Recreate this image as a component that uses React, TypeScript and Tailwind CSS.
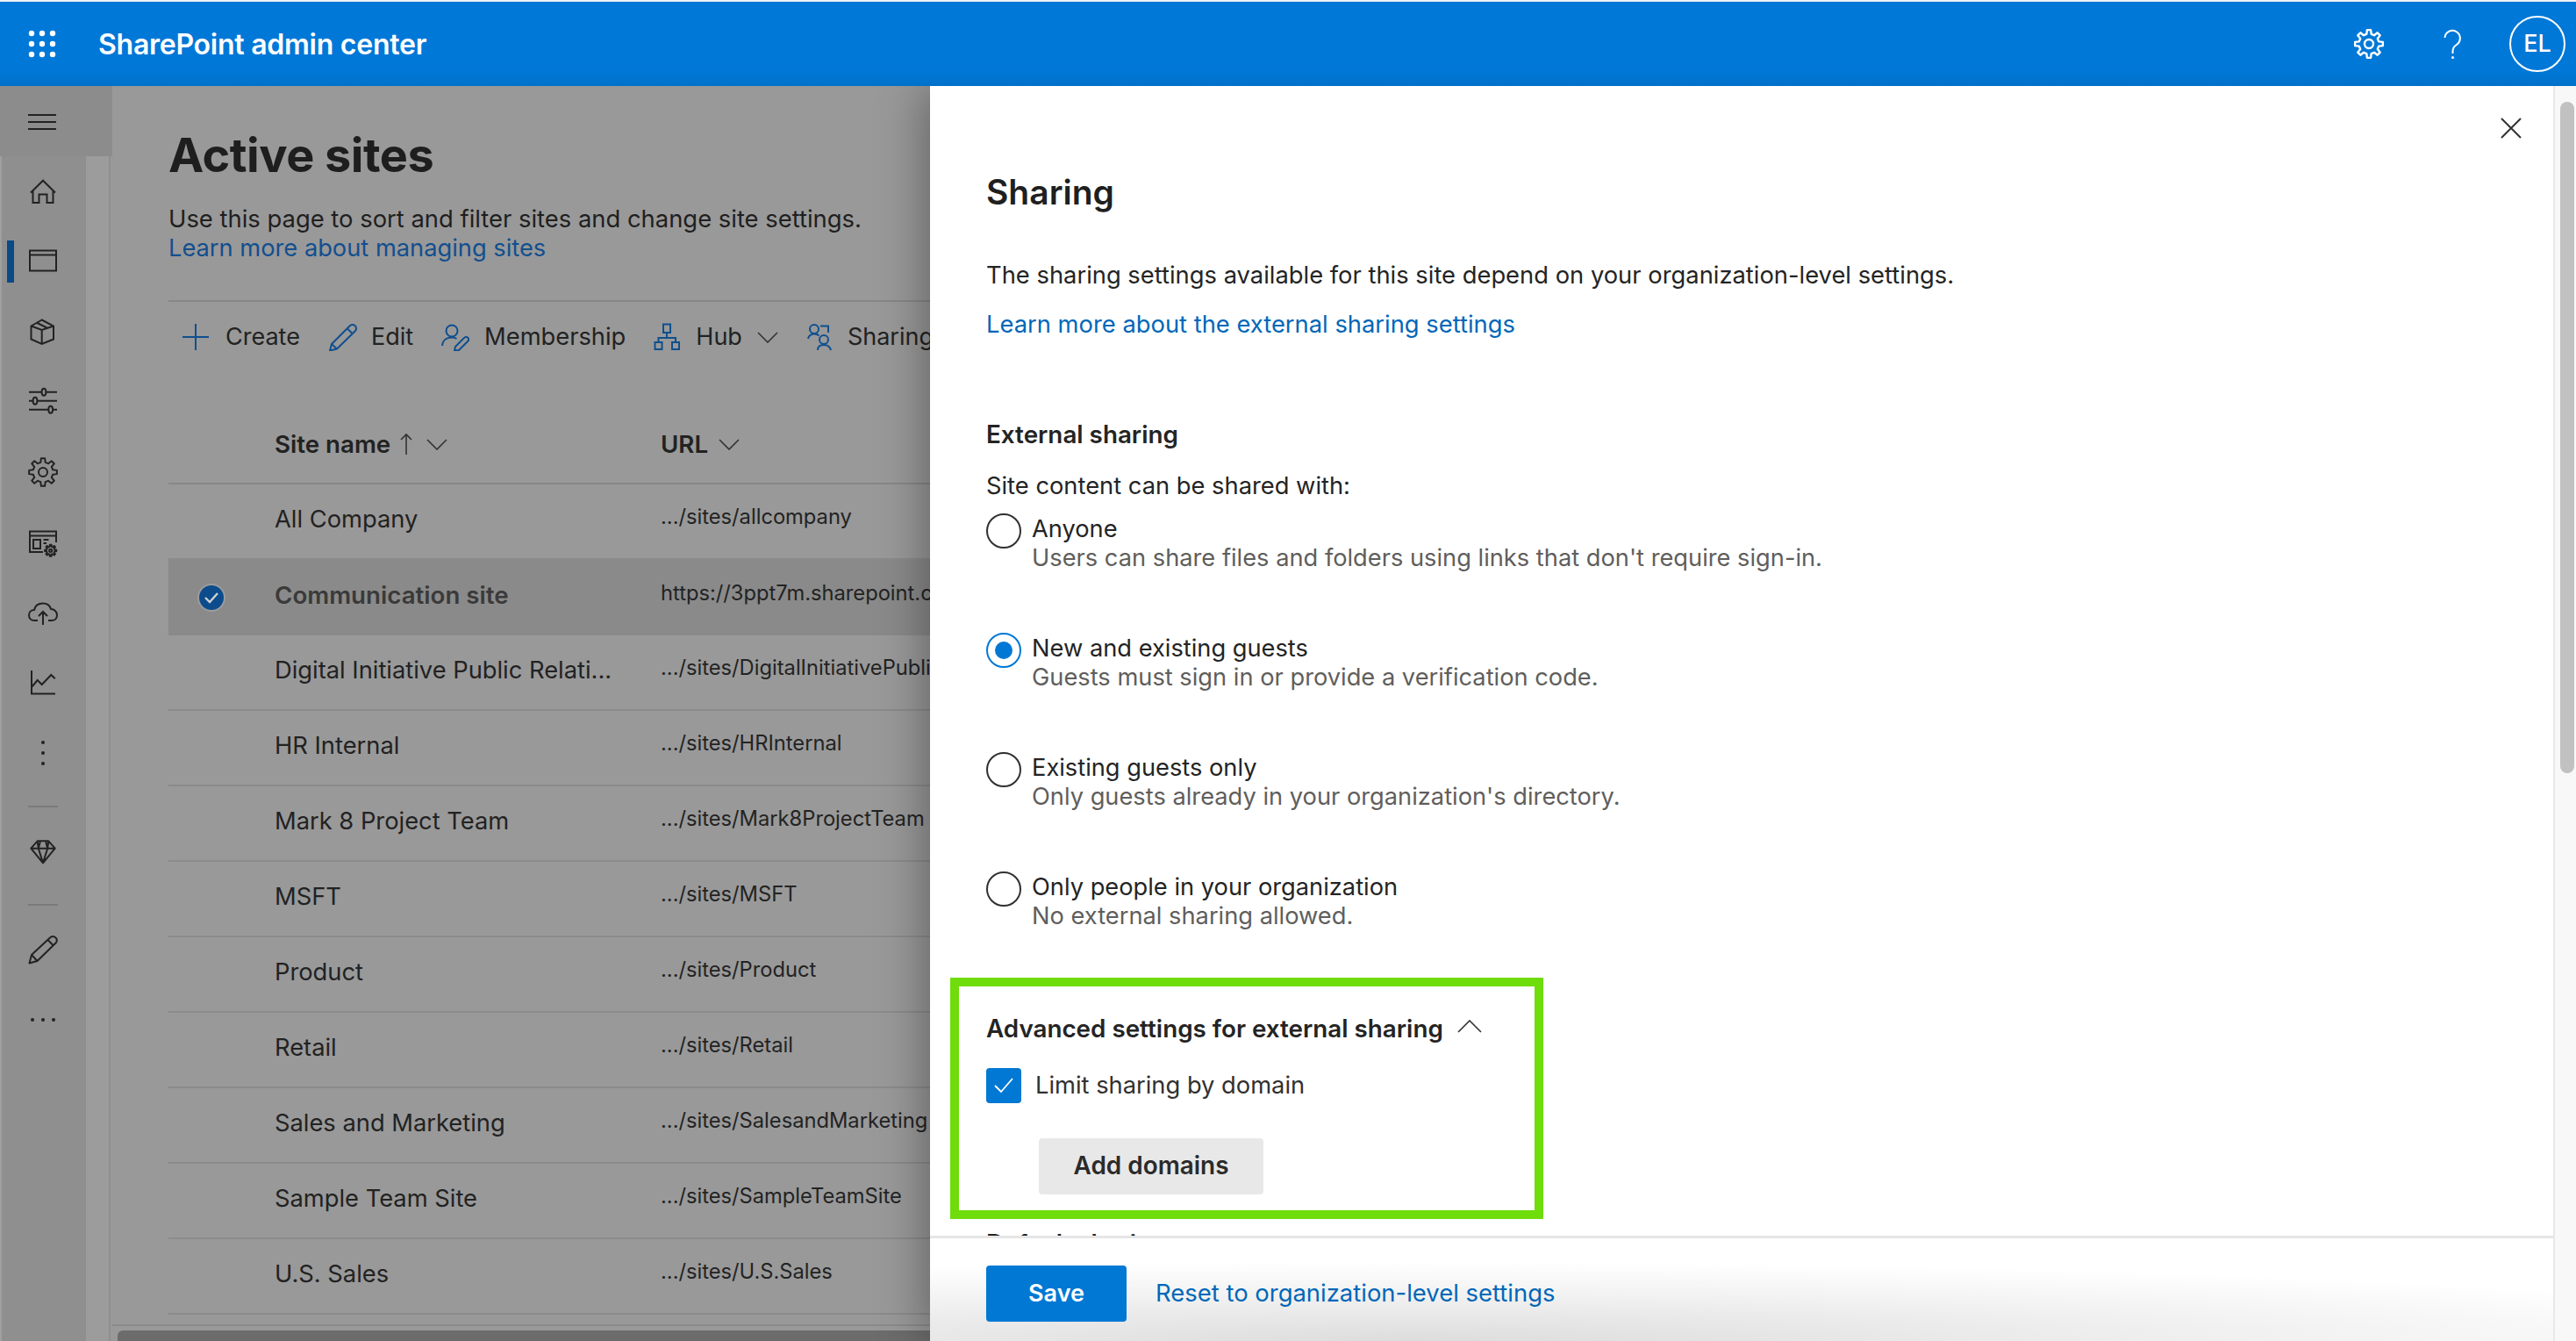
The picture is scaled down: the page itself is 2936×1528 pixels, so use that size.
import React from "react";

function gearPath(cx: number, cy: number, rOut: number, rIn: number, teeth = 8) {
  const step = (Math.PI * 2) / teeth;
  let d = "";
  for (let i = 0; i < teeth; i++) {
    const a = i * step - Math.PI / 2;
    const pts: [number, number][] = [
      [rIn, a - step * 0.3],
      [rOut, a - step * 0.17],
      [rOut, a + step * 0.17],
      [rIn, a + step * 0.3],
    ];
    pts.forEach(([r, t], j) => {
      const x = (cx + r * Math.cos(t)).toFixed(2);
      const y = (cy + r * Math.sin(t)).toFixed(2);
      d += (i === 0 && j === 0 ? "M" : "L") + x + " " + y + " ";
    });
  }
  return d + "Z";
}

const NavSvg = ({ children }: { children: React.ReactNode }) => (
  <svg width="48" height="48" viewBox="0 0 48 48" fill="none" stroke="#222222" strokeWidth="2">
    {children}
  </svg>
);

const navIcons: React.ReactNode[] = [
  <path d="M10 25.5 L24 11.7 L38 25.5 M12.5 23 V37 H19.5 V27.5 H28.5 V37 H35.5 V23" />,
  <>
    <rect x="9" y="11.5" width="30" height="23" />
    <path d="M9 16.5 H39" />
  </>,
  <path d="M22.7 10.5 L10.5 17.5 V32.5 L22.7 38 L36 32.5 V17.5 Z M10.5 17.5 L22.7 22 L36 17.5 M22.7 22 V38 M16.5 13.5 L29.5 20" />,
  <>
    <path d="M8 12.7 H40 M8 22.7 H40 M8 32.7 H40" />
    <ellipse cx="25" cy="12.7" rx="2.4" ry="4" fill="#909090" />
    <ellipse cx="15" cy="22.7" rx="2.4" ry="4" fill="#909090" />
    <ellipse cx="32.7" cy="32.7" rx="2.4" ry="4" fill="#909090" />
  </>,
  <>
    <path d={gearPath(24, 24, 16, 11.5)} strokeLinejoin="round" />
    <circle cx="24" cy="24" r="5" />
  </>,
  <>
    <path d="M24 35 H9 V11.5 H39 V24 M9 16.5 H39" />
    <rect x="13" y="21" width="8" height="10" />
    <path d="M24.5 21 H30.5 M24.5 25 H28" />
    <path d={gearPath(32.7, 33.3, 6.6, 4.6)} strokeLinejoin="round" />
    <circle cx="32.7" cy="33.3" r="1.6" />
  </>,
  <path d="M18 33 H14 C10.5 33 8 30.5 8 27 C8 23.5 10.5 21 14 21 C15 16 19 13.5 24 13.5 C29 13.5 32 16.5 33 20 C37 20 40 23 40 27 C40 30.5 37.5 33 34 33 H30 M24 38 V23 M19 28 L24 23 L29 28" />,
  <path d="M11 10 V36.5 H38 M11 29 L17.7 21 L22.7 26 L33.3 15 L37.7 19.3" />,
  <g fill="#222222" stroke="none">
    <circle cx="24" cy="12" r="2" />
    <circle cx="24" cy="24" r="2" />
    <circle cx="24" cy="36" r="2" />
  </g>,
];

const diamond = (
  <path d="M17.7 12.3 H30.3 L37.7 20.7 L24 37.3 L10.3 20.7 Z M10.3 20.7 H37.7 M17.7 12.3 L18.8 20.7 L24 37.3 L29.2 20.7 L30.3 12.3 M18.8 20.7 L21 12.3 M29.2 20.7 L27 12.3" strokeLinejoin="round" />
);
const navPencil = (
  <path d="M8.5 39.5 L11 30 L32.5 10 A4.5 4.5 0 0 1 39 16 L17.5 37 Z M29.5 13 L36 19.5 M11 30 L17.5 37" strokeLinejoin="round" />
);
const navMore = (
  <g fill="#222222" stroke="none">
    <circle cx="12" cy="24" r="2" />
    <circle cx="24" cy="24" r="2" />
    <circle cx="36" cy="24" r="2" />
  </g>
);

const Slot = ({ children, active }: { children: React.ReactNode; active?: boolean }) => (
  <div className="relative flex h-[80px] items-center justify-center">
    {active && <div className="absolute left-[8px] top-[16px] h-[48px] w-[8px] bg-[#0a4a86]" />}
    <NavSvg>{children}</NavSvg>
  </div>
);

const Sep = () => <div className="mx-[32px] mb-[10px] mt-[20px] h-[2px] bg-[#7a7a7a]" />;

const ToolIcon = ({ children }: { children: React.ReactNode }) => (
  <svg width="32" height="32" viewBox="0 0 32 32" fill="none" stroke="#0f4f8e" strokeWidth="2" className="shrink-0">
    {children}
  </svg>
);

const Chevron = ({ className, color = "#333333" }: { className?: string; color?: string }) => (
  <svg width="24" height="13" viewBox="0 0 24 13" fill="none" stroke={color} strokeWidth="1.6" className={className}>
    <path d="M1 1 L12 12 L23 1" />
  </svg>
);

const rows = [
  ["All Company", ".../sites/allcompany"],
  ["Communication site", "https://3ppt7m.sharepoint.com/sites/Communicationsite"],
  ["Digital Initiative Public Relati...", ".../sites/DigitalInitiativePublicRelations"],
  ["HR Internal", ".../sites/HRInternal"],
  ["Mark 8 Project Team", ".../sites/Mark8ProjectTeam"],
  ["MSFT", ".../sites/MSFT"],
  ["Product", ".../sites/Product"],
  ["Retail", ".../sites/Retail"],
  ["Sales and Marketing", ".../sites/SalesandMarketing"],
  ["Sample Team Site", ".../sites/SampleTeamSite"],
  ["U.S. Sales", ".../sites/U.S.Sales"],
];

const radios = [
  ["Anyone", "Users can share files and folders using links that don't require sign-in."],
  ["New and existing guests", "Guests must sign in or provide a verification code."],
  ["Existing guests only", "Only guests already in your organization's directory."],
  ["Only people in your organization", "No external sharing allowed."],
];

export default function App() {
  return (
    <div className="flex h-[1528px] w-[2936px] flex-col overflow-hidden bg-white font-['Inter',sans-serif] text-[#242424]">
      <div className="h-[2px] shrink-0 bg-[#eef1f5]" />
      {/* Header */}
      <header className="relative z-20 flex h-[96px] shrink-0 items-center bg-[linear-gradient(#0078d7_80%,#0071ca)] text-white">
        <div className="flex w-[96px] justify-center">
          <svg width="36" height="36" viewBox="0 0 36 36" fill="#ffffff">
            {[6, 18, 30].map((y) =>
              [6, 18, 30].map((x) => <circle key={`${x}-${y}`} cx={x} cy={y} r="3.2" />)
            )}
          </svg>
        </div>
        <div className="ml-[16px] pt-[1px] text-[32px] font-semibold leading-[40px] tracking-[-0.25px]">SharePoint admin center</div>
        <div className="ml-auto flex items-center pr-[12px]">
          <svg width="48" height="48" viewBox="0 0 48 48" fill="none" stroke="#ffffff" strokeWidth="2.4">
            <path d={gearPath(24, 24, 16, 11.5)} strokeLinejoin="round" />
            <circle cx="24" cy="24" r="5" />
          </svg>
          <svg width="48" height="48" viewBox="0 0 48 48" fill="none" stroke="#ffffff" strokeWidth="2" className="ml-[47px]">
            <path d="M15.5 17 A8.7 8.7 0 1 1 29.5 24.5 C26 27 24.5 28.5 24.5 33 V35" />
            <circle cx="24.5" cy="39.5" r="1.5" fill="#ffffff" stroke="none" />
          </svg>
          <div className="ml-[41px] flex h-[64px] w-[64px] items-center justify-center rounded-full border-[2px] border-white text-[27px] font-medium">
            EL
          </div>
        </div>
      </header>

      <div className="flex min-h-0 flex-1">
        {/* Left rail */}
        <div className="flex w-[128px] shrink-0 flex-col bg-[#999999]">
          <div className="flex h-[80px] items-center bg-[#8c8c8c] pl-[24px]">
            <NavSvg>
              <path d="M8 17 H40 M8 25 H40 M8 33 H40" />
            </NavSvg>
          </div>
          <div className="flex min-h-0 flex-1">
            <nav className="w-[98px] bg-[#8f8f8f] shadow-[inset_2px_0_0_#a0a0a0]">
              {navIcons.map((ic, i) => (
                <Slot key={i} active={i === 1}>
                  {ic}
                </Slot>
              ))}
              <Sep />
              <Slot>{diamond}</Slot>
              <Sep />
              <Slot>{navPencil}</Slot>
              <Slot>{navMore}</Slot>
            </nav>
            <div className="w-[28px] border-r-[2px] border-[#8e8e8e] bg-[#9c9c9c]" />
          </div>
        </div>

        {/* Main dimmed page */}
        <main className="flex min-w-0 flex-1 flex-col overflow-hidden bg-[#999999]">
          <div className="min-h-0 flex-1 overflow-hidden pl-[64px] pt-[47px]">
            <h1 className="text-[54px] font-bold leading-[64px] tracking-[-0.5px] text-[#1e1e1e]">Active sites</h1>
            <div className="mt-[23px] whitespace-nowrap text-[27.4px] leading-[34px] text-[#1f1f1f]">
              Use this page to sort and filter sites and change site settings.
            </div>
            <div className="text-[27.25px] leading-[34px] text-[#124f8f]">Learn more about managing sites</div>
            <div className="mt-[42px] h-[2px] w-[1400px] bg-[#878787]" />
            <div className="flex h-[78px] w-[1400px] items-center pl-[15px] pt-[2px] text-[27px] text-[#222222]">
              <ToolIcon>
                <path d="M16 1 V31 M1 16 H31" />
              </ToolIcon>
              <span className="ml-[18px]">Create</span>
              <div className="ml-[33px]">
                <ToolIcon>
                  <path d="M1 31.5 L3 24 L23.5 3.5 A4 4 0 0 1 30 9 L9 29.5 Z M21 6.5 L27 12.5 M3 24 L9 29.5" strokeLinejoin="round" />
                </ToolIcon>
              </div>
              <span className="ml-[16px]">Edit</span>
              <div className="ml-[32px]">
                <ToolIcon>
                  <circle cx="12" cy="9" r="6.5" />
                  <path d="M1 26 C1.5 20 6 16.5 12 16.5 C14 16.5 16 17 17.5 18 M15 31.5 L16 27 L26 17 A2.5 2.5 0 0 1 30.5 20.5 L20 31 Z" strokeLinejoin="round" />
                </ToolIcon>
              </div>
              <span className="ml-[17px] text-[27.3px]">Membership</span>
              <div className="ml-[32px]">
                <ToolIcon>
                  <path d="M11 1.5 H19 V11 H11 Z M15 11 V17 M5.5 22 V17 H25 V22 M1.5 22 H9.5 V30 H1.5 Z M21 22 H29 V30 H21 Z" />
                </ToolIcon>
              </div>
              <span className="ml-[16px]">Hub</span>
              <Chevron className="ml-[17px]" />
              <div className="ml-[33px]">
                <ToolIcon>
                  <circle cx="8" cy="7" r="5" />
                  <circle cx="19" cy="19" r="5" />
                  <path d="M1 18 C1.5 14.5 5 12.5 8 12.5 C10 12.5 12 13 13.5 14.5 M15 3.5 H24 V11 M12 31 C12 27 15 25 19 25 C23 25 26 27 27 31" />
                </ToolIcon>
              </div>
              <span className="ml-[14px]">Sharing</span>
            </div>
            <div className="h-[130px] w-[1400px] border-b-[2px] border-[#878787] pl-[121px] pt-[67px]">
              <div className="grid grid-cols-[440px_1fr] text-[27.7px] font-semibold leading-[34px] text-[#222222]">
                <div className="flex items-center">
                  <span>Site name</span>
                  <svg width="16" height="26" viewBox="0 0 16 26" fill="none" stroke="#333333" strokeWidth="1.6" className="ml-[10px]">
                    <path d="M8 25 V2 M2 8 L8 2 L14 8" />
                  </svg>
                  <Chevron className="ml-[15px]" />
                </div>
                <div className="flex items-center">
                  <span>URL</span>
                  <Chevron className="ml-[12px]" />
                </div>
              </div>
            </div>
            {rows.map(([name, url], i) => {
              const selected = i === 1;
              return (
                <div
                  key={name}
                  className={
                    selected
                      ? "grid h-[86px] w-[1400px] grid-cols-[121px_440px_1fr] items-center bg-[#8a8a8a]"
                      : "grid h-[86px] w-[1400px] grid-cols-[121px_440px_1fr] items-center border-b-[2px] border-[#8b8b8b]"
                  }
                >
                  <div className="pl-[33px]">
                    {selected && (
                      <div className="flex h-[32px] w-[32px] items-center justify-center rounded-full border-[2px] border-[#9c9c9c] bg-[#0c4c8c]">
                        <svg width="18" height="14" viewBox="0 0 18 14" fill="none" stroke="#d2d2d2" strokeWidth="2.4">
                          <path d="M2 7 L7 12 L16 2" />
                        </svg>
                      </div>
                    )}
                  </div>
                  <div
                    className={
                      selected
                        ? "pb-[7px] text-[27.7px] font-semibold leading-[34px] text-[#3a3a3a]"
                        : "pb-[4px] text-[27.3px] leading-[34px] text-[#222222]"
                    }
                  >
                    {name}
                  </div>
                  <div className="whitespace-nowrap pb-[10px] text-[23.7px] leading-[30px] text-[#232323]">{url}</div>
                </div>
              );
            })}
          </div>
          <div className="h-[19px] shrink-0 border-t-[2px] border-[#8a8a8a] pl-[6px] pt-[5px]">
            <div className="h-[14px] w-[1200px] rounded-tl-[6px] bg-[#6c6c6c]" />
          </div>
        </main>

        {/* Sharing panel */}
        <aside className="relative z-10 flex w-[1876px] shrink-0 bg-white shadow-[-6px_0_50px_rgba(0,0,0,0.35)]">
          <div className="flex min-w-0 flex-1 flex-col">
            <div className="min-h-0 flex-1 overflow-hidden">
              <div className="flex justify-end pr-[36px] pt-[36px]">
                <svg width="24" height="24" viewBox="0 0 24 24" fill="none" stroke="#323130" strokeWidth="2">
                  <path d="M1 1 L23 23 M23 1 L1 23" />
                </svg>
              </div>
              <div className="pl-[64px]">
                <h2 className="mt-[37px] text-[39px] font-semibold leading-[48px] text-[#1f1f1f]">Sharing</h2>
                <div className="mt-[54px] text-[27.35px] leading-[34px] text-[#242424]">
                  The sharing settings available for this site depend on your organization-level settings.
                </div>
                <div className="mt-[22px] text-[27.35px] leading-[34px] text-[#0067b8]">
                  Learn more about the external sharing settings
                </div>
                <div className="mt-[91px] text-[27.8px] font-semibold leading-[34px] text-[#242424]">External sharing</div>
                <div className="mt-[25px] text-[27.3px] leading-[34px] text-[#242424]">Site content can be shared with:</div>
                <div className="mt-[14px] flex flex-col gap-[68px]">
                  {radios.map(([label, desc], i) => (
                    <div key={label} className="flex h-[68px] items-start">
                      <div
                        className={
                          i === 1
                            ? "flex h-[40px] w-[40px] shrink-0 items-center justify-center rounded-full border-[2px] border-[#0078d4]"
                            : "flex h-[40px] w-[40px] shrink-0 items-center justify-center rounded-full border-[2px] border-[#323130]"
                        }
                      >
                        {i === 1 && <div className="h-[20px] w-[20px] rounded-full bg-[#0078d4]" />}
                      </div>
                      <div className="pl-[12px] pt-[1px] text-[27.25px] leading-[33px]">
                        <div className="text-[#242424]">{label}</div>
                        <div className="text-[#605e5c]">{desc}</div>
                      </div>
                    </div>
                  ))}
                </div>
                <div className="-ml-[41px] mt-[53px] h-[275px] w-[676px] border-[10px] border-[#6fdc0b] pl-[31px] pt-[31px]">
                  <div className="flex items-center">
                    <span className="text-[27.8px] font-semibold leading-[34px] text-[#242424]">
                      Advanced settings for external sharing
                    </span>
                    <svg width="28" height="15" viewBox="0 0 28 15" fill="none" stroke="#333333" strokeWidth="1.6" className="mb-[6px] ml-[16px]">
                      <path d="M1 14 L14 1 L27 14" />
                    </svg>
                  </div>
                  <div className="mt-[28px] flex items-center">
                    <div className="flex h-[40px] w-[40px] items-center justify-center rounded-[4px] bg-[#0078d4]">
                      <svg width="24" height="18" viewBox="0 0 24 18" fill="none" stroke="#ffffff" strokeWidth="1.8">
                        <path d="M2 9 L9 16 L22 1" />
                      </svg>
                    </div>
                    <span className="ml-[16px] text-[27.3px] leading-[34px] text-[#323130]">Limit sharing by domain</span>
                  </div>
                  <div className="ml-[60px] mt-[40px] flex h-[64px] w-[256px] items-center justify-center rounded-[4px] bg-[#e8e8e8] text-[27.9px] font-semibold text-[#2b2b2b]">
                    Add domains
                  </div>
                </div>
                <div className="mt-[11px] text-[27.8px] font-semibold leading-[34px] text-[#242424]">Default sharing</div>
              </div>
            </div>
            <footer className="flex h-[120px] shrink-0 items-start gap-[33px] border-t-[3px] border-[#e6e6e6] bg-[radial-gradient(ellipse_1700px_90px_at_550px_100%,#dddddd_0%,#f2f2f2_60%,#ffffff_100%)] pl-[64px] pt-[31px]">
              <div className="flex h-[64px] w-[160px] items-center justify-center rounded-[4px] bg-[#0078d4] text-[27px] font-semibold text-white">
                Save
              </div>
              <div className="flex h-[64px] items-center text-[27.45px] text-[#0067b8]">Reset to organization-level settings</div>
            </footer>
          </div>
          <div className="w-[26px] shrink-0 border-l-[2px] border-[#e8e8e8] bg-[#f8f8f8] pl-[6px] pt-[18px]">
            <div className="h-[765px] w-[16px] rounded-full bg-[#c1c1c1]" />
          </div>
        </aside>
      </div>
    </div>
  );
}
